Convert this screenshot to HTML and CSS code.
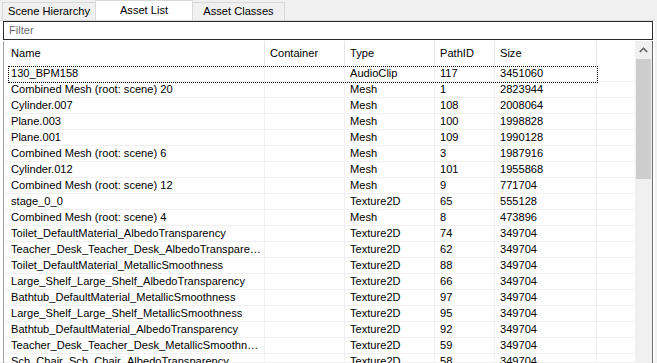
FILE: index.html
```html
<!DOCTYPE html>
<html lang="en">
  <head>
    <meta charset="UTF-8" />
    <meta name="viewport" content="width=device-width, initial-scale=1.0" />
    <title>Asset List</title>
    <link rel="stylesheet" href="styles.css">
  </head>
  <body>
    <div class="tabs">
      <div class="tab">Scene Hierarchy</div>
      <div class="tab tab-active">Asset List</div>
      <div class="tab tab-last">Asset Classes</div>
    </div>
    <div class="page">
      <div class="filter">Filter</div>
      <div class="list">
        <div class="list-body">
          <div class="header">
            <div class="cell c-name">Name</div>
            <div class="cell c-cont">Container</div>
            <div class="cell c-type">Type</div>
            <div class="cell c-path">PathID</div>
            <div class="cell c-size">Size</div>
            <div class="cell c-rest"></div>
          </div>
          <div class="rows"></div>
        </div>
        <div class="scrollbar">
          <div class="scroll-up">
            <svg width="9" height="6" viewBox="0 0 9 6"><polyline points="0.8,5 4.5,1.3 8.2,5" fill="none" stroke="#606060" stroke-width="1.6"/></svg>
          </div>
          <div class="thumb"></div>
        </div>
      </div>
    </div>

    <script>
      let assets = [
        ["130_BPM158", "AudioClip", 117, 3451060],
        ["Combined Mesh (root: scene) 20", "Mesh", 1, 2823944],
        ["Cylinder.007", "Mesh", 108, 2008064],
        ["Plane.003", "Mesh", 100, 1998828],
        ["Plane.001", "Mesh", 109, 1990128],
        ["Combined Mesh (root: scene) 6", "Mesh", 3, 1987916],
        ["Cylinder.012", "Mesh", 101, 1955868],
        ["Combined Mesh (root: scene) 12", "Mesh", 9, 771704],
        ["stage_0_0", "Texture2D", 65, 555128],
        ["Combined Mesh (root: scene) 4", "Mesh", 8, 473896],
        ["Toilet_DefaultMaterial_AlbedoTransparency", "Texture2D", 74, 349704],
        ["Teacher_Desk_Teacher_Desk_AlbedoTransparency", "Texture2D", 62, 349704],
        ["Toilet_DefaultMaterial_MetallicSmoothness", "Texture2D", 88, 349704],
        ["Large_Shelf_Large_Shelf_AlbedoTransparency", "Texture2D", 66, 349704],
        ["Bathtub_DefaultMaterial_MetallicSmoothness", "Texture2D", 97, 349704],
        ["Large_Shelf_Large_Shelf_MetallicSmoothness", "Texture2D", 95, 349704],
        ["Bathtub_DefaultMaterial_AlbedoTransparency", "Texture2D", 92, 349704],
        ["Teacher_Desk_Teacher_Desk_MetallicSmoothness", "Texture2D", 59, 349704],
        ["Sch_Chair_Sch_Chair_AlbedoTransparency", "Texture2D", 58, 349704]
      ];

      let rows = document.querySelector(".rows");
      for (let i = 0; i < assets.length; i++) {
        let a = assets[i];
        let row = document.createElement("div");
        row.className = i == 0 ? "row row-focus" : "row";
        row.innerHTML =
          `<div class="cell c-name">${a[0]}</div>` +
          `<div class="cell c-cont"></div>` +
          `<div class="cell c-type">${a[1]}</div>` +
          `<div class="cell c-path">${a[2]}</div>` +
          `<div class="cell c-size">${a[3]}</div>` +
          `<div class="cell c-rest"></div>`;
        rows.appendChild(row);
      }
    </script>
  </body>
</html>
```

FILE: styles.css
```css
body {
  margin: 0;
  background-color: #f0f0f0;
  font-family: "Liberation Sans", Arial, sans-serif;
  font-size: 11.1px;
  color: #000;
  height: 363px;
  overflow: hidden;
}
.tabs {
  display: flex;
  align-items: flex-end;
  height: 20px;
  padding-left: 2px;
}
.tab {
  box-sizing: border-box;
  height: 18px;
  width: 94px;
  border: 1px solid #d9d9d9;
  border-bottom: none;
  background-color: #f0f0f0;
  text-align: center;
  line-height: 17px;
}
.tab-active {
  height: 20px;
  width: 98px;
  margin: 0 -1px;
  background-color: #fff;
  line-height: 18px;
  position: relative;
  z-index: 1;
}
.tab-last {
  width: 93px;
}
.page {
  background-color: #fff;
  border-top: 1px solid #d9d9d9;
  width: 655px;
  height: 342px;
  padding: 0 0 0 3px;
  box-sizing: border-box;
}
.filter {
  box-sizing: border-box;
  width: 650px;
  height: 19px;
  border: 1px solid #2b2b2b;
  color: #6d6d6d;
  padding-left: 5px;
  line-height: 17px;
}
.list {
  display: flex;
  box-sizing: border-box;
  margin-top: 1px;
  width: 650px;
  height: 322px;
  border-left: 1px solid #a0a0a0;
  border-right: 1px solid #6e6e6e;
  overflow: hidden;
}
.list-body {
  flex: 1;
}
.header,
.row {
  display: flex;
}
.header {
  height: 25px;
  line-height: 25px;
}
.header .cell {
  border-right: 1px solid #e5e5e5;
}
.row {
  position: relative;
  height: 15px;
  line-height: 15px;
  border-bottom: 1px solid #f0f0f0;
}
.row .cell {
  border-right: 1px solid #f0f0f0;
}
.row-focus::after {
  content: "";
  position: absolute;
  left: 4px;
  top: 0;
  width: 588px;
  height: 15px;
  border: 1px dotted #000;
}
.cell {
  box-sizing: border-box;
  padding-left: 5px;
  padding-right: 4px;
  white-space: nowrap;
  overflow: hidden;
  text-overflow: ellipsis;
}
.c-name {
  width: 261px;
  padding-left: 7px;
  padding-right: 2px;
}
.c-cont {
  width: 80px;
}
.c-type {
  width: 90px;
}
.c-path {
  width: 60px;
}
.c-size {
  width: 102px;
}
.header .c-rest,
.row .c-rest {
  flex: 1;
  border-right: none;
}
.scrollbar {
  width: 17px;
  background-color: #f0f0f0;
  display: flex;
  flex-direction: column;
  align-items: center;
}
.scroll-up {
  height: 17px;
  width: 17px;
  display: flex;
  justify-content: center;
  align-items: center;
}
.thumb {
  margin-top: 1px;
  width: 15px;
  height: 120px;
  background-color: #cdcdcd;
}
```
